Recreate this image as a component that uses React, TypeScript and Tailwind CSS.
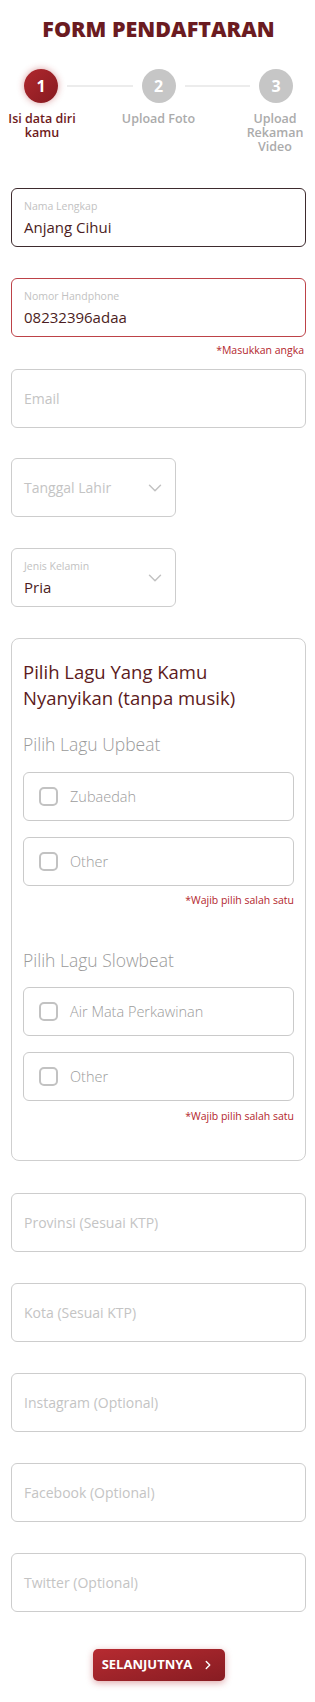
import { ChevronDown, ChevronRight } from "lucide-react";

const font = { fontFamily: "'Open Sans', 'Noto Sans', 'Liberation Sans', sans-serif" };

const steps = [
  { n: 1, label: "Isi data diri kamu", active: true },
  { n: 2, label: "Upload Foto", active: false },
  { n: 3, label: "Upload Rekaman Video", active: false },
];

function Circle({ n, active }: { n: number; active: boolean }) {
  return (
    <div
      className={
        active
          ? "flex h-[34px] w-[34px] shrink-0 items-center justify-center rounded-full bg-gradient-to-br from-[#b0282e] to-[#861a20] text-[16px] font-bold text-white shadow-[0_0_7px_rgba(176,39,44,0.45)]"
          : "flex h-[34px] w-[34px] shrink-0 items-center justify-center rounded-full bg-[#c6c6c6] text-[16px] font-bold text-white"
      }
    >
      {n}
    </div>
  );
}

function Stepper() {
  return (
    <div className="mt-[28px]">
      <div className="flex items-center px-[13px]">
        <Circle n={1} active />
        <div className="mx-[9px] h-[2px] flex-1 bg-[#ececec]" />
        <Circle n={2} active={false} />
        <div className="mx-[9px] h-[2px] flex-1 bg-[#ececec]" />
        <Circle n={3} active={false} />
      </div>
      <div className="mt-[9px] flex justify-between">
        {steps.map((s) => (
          <div key={s.n} className="-mx-[4px] flex w-[70px] justify-center">
            <p
              className={
                s.n === 2
                  ? "whitespace-nowrap text-center text-[12.5px] font-semibold leading-[14px] text-[#ababab]"
                  : s.active
                    ? "text-center text-[12.5px] font-semibold leading-[14px] text-[#6e1a20]"
                    : "text-center text-[12.5px] font-semibold leading-[14px] text-[#ababab]"
              }
            >
              {s.label}
            </p>
          </div>
        ))}
      </div>
    </div>
  );
}

function Field({
  label,
  value,
  tone = "idle",
  narrow = false,
  select = false,
  className = "",
}: {
  label: string;
  value?: string;
  tone?: "idle" | "focus" | "error";
  narrow?: boolean;
  select?: boolean;
  className?: string;
}) {
  const border =
    tone === "focus" ? "border-[#3e2b2e]" : tone === "error" ? "border-[#bd4248]" : "border-[#cdcdcd]";
  return (
    <div
      className={`flex h-[59px] items-center justify-between rounded-[6px] border bg-white pl-[12px] pr-[9px] ${border} ${
        narrow ? "w-[165px]" : "w-full"
      } ${className}`}
    >
      {value ? (
        <div className="flex flex-col pt-[1px]">
          <span className="text-[10.5px] leading-[16px] text-[#c2c2c2]">{label}</span>
          <span className="mt-[2px] text-[15px] leading-[22px] text-[#4b1d22]">{value}</span>
        </div>
      ) : (
        <span className="text-[14px] leading-[22px] text-[#c4c4c4]">{label}</span>
      )}
      {select ? <ChevronDown size={22} strokeWidth={1.6} className="text-[#c2c2c2]" /> : null}
    </div>
  );
}

function Hint({ text, className = "" }: { text: string; className?: string }) {
  return <p className={`text-right text-[10.5px] leading-[14px] text-[#b3262d] ${className}`}>{text}</p>;
}

function Option({ label, className = "" }: { label: string; className?: string }) {
  return (
    <label className={`flex h-[49px] items-center gap-[12px] rounded-[6px] border border-[#cacaca] pl-[15px] ${className}`}>
      <span className="h-[19px] w-[19px] rounded-[5px] border-2 border-[#c2c2c2]" />
      <span className="text-[14.5px] font-light text-[#9c9c9c]">{label}</span>
    </label>
  );
}

function SongCard() {
  return (
    <div className="mt-[31px] rounded-[8px] border border-[#cfcfcf] px-[11px] pb-[37px] pt-[20px]">
      <h2 className="text-[18.5px] leading-[26px] text-[#5c1a20]">Pilih Lagu Yang Kamu Nyanyikan (tanpa musik)</h2>
      <p className="mt-[21px] text-[17.5px] font-light leading-[24px] text-[#9a9a9a]">Pilih Lagu Upbeat</p>
      <Option label="Zubaedah" className="mt-[16px]" />
      <Option label="Other" className="mt-[16px]" />
      <Hint text="*Wajib pilih salah satu" className="mt-[7px]" />
      <p className="mt-[41px] text-[17.5px] font-light leading-[24px] text-[#9a9a9a]">Pilih Lagu Slowbeat</p>
      <Option label="Air Mata Perkawinan" className="mt-[15px]" />
      <Option label="Other" className="mt-[16px]" />
      <Hint text="*Wajib pilih salah satu" className="mt-[8px]" />
    </div>
  );
}

export default function App() {
  return (
    <div className="min-h-[1702px] bg-white pb-[21px] pl-[11px] pr-[9px] pt-[17px]" style={font}>
      <h1 className="text-center text-[21.5px] font-extrabold leading-[24px] text-[#6b1b21]">FORM PENDAFTARAN</h1>

      <Stepper />

      <div className="mt-[34px]">
        <Field label="Nama Lengkap" value="Anjang Cihui" tone="focus" />
        <Field label="Nomor Handphone" value="08232396adaa" tone="error" className="mt-[31px]" />
        <Hint text="*Masukkan angka" className="mt-[6px] pr-[2px]" />
        <Field label="Email" className="mt-[12px]" />
        <Field label="Tanggal Lahir" narrow select className="mt-[30px]" />
        <Field label="Jenis Kelamin" value="Pria" narrow select className="mt-[31px]" />

        <SongCard />

        <Field label="Provinsi (Sesuai KTP)" className="mt-[32px]" />
        <Field label="Kota (Sesuai KTP)" className="mt-[31px]" />
        <Field label="Instagram (Optional)" className="mt-[31px]" />
        <Field label="Facebook (Optional)" className="mt-[31px]" />
        <Field label="Twitter (Optional)" className="mt-[31px]" />
      </div>

      <div className="mt-[37px] flex justify-center">
        <button
          type="button"
          className="flex h-[32px] w-[132px] items-center justify-center gap-[9px] rounded-[5px] bg-gradient-to-br from-[#b72b31] to-[#871c22] text-[13px] font-bold text-white shadow-[0_2px_7px_rgba(176,39,44,0.4)]"
        >
          SELANJUTNYA
          <ChevronRight size={14} strokeWidth={2.4} />
        </button>
      </div>
    </div>
  );
}
